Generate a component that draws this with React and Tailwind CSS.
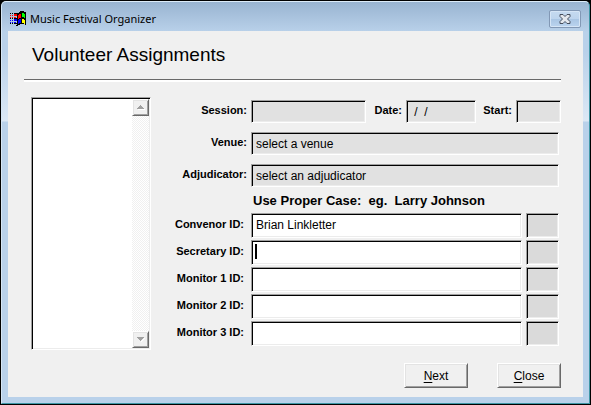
import React from "react";
import { clsx } from "clsx";

const sunken =
  "block min-w-0 rounded-none border border-t-[#a0a0a0] border-l-[#a0a0a0] border-b-white border-r-white shadow-[inset_1px_1px_0_#000,inset_-1px_-1px_0_#ececec] outline-none";
const raised =
  "border border-t-white border-l-white border-b-[#696969] border-r-[#696969] shadow-[inset_1px_1px_0_#e3e3e3,inset_-1px_-1px_0_#a0a0a0] bg-[#f0f0f0]";
const labelText = "shrink-0 text-right text-[11px] font-bold";

function Field({ className, ...props }) {
  return (
    <input
      type="text"
      className={clsx(sunken, "px-1 text-[12px] text-black", className)}
      {...props}
    />
  );
}

function WindowsLogo() {
  return (
    <svg width="16" height="16" viewBox="0 0 16 16" shapeRendering="crispEdges" aria-hidden="true">
      <path
        fill="#000"
        d="M9 1h1V0h4v1h2v13h-1v-1h-5v1H8v1H6v-1h1V2h2zM0 2h1v1H0zM2 2h1v1H2zM4 2h3v1H4zM0 7h1v1H0zM2 7h1v1H2zM4 7h3v1H4zM0 12h1v1H0zM2 12h1v1H2zM4 12h3v1H4z"
      />
      <path fill="#f00" d="M8 4h1V3h2v4H9v1H8zM0 4h1v1H0zM2 4h1v1H2zM4 3h3v2H4zM0 6h1v1H0zM2 6h1v1H2zM4 6h2v1H4z" />
      <path fill="#0f0" d="M12 2h2v1h1v4h-1V6h-2z" />
      <path fill="#00f" d="M8 9h1V8h2v4H9v1H8zM0 9h1v1H0zM2 9h1v1H2zM4 8h3v2H4zM0 11h1v1H0zM2 11h1v1H2zM4 11h2v1H4z" />
      <path fill="#ff0" d="M12 8h2v1h1v4h-1v-1h-2z" />
    </svg>
  );
}

function ScrollButton({ up }) {
  return (
    <button
      type="button"
      aria-label={up ? "Scroll up" : "Scroll down"}
      className={clsx(raised, "flex h-[17px] w-[17px] items-center justify-center")}
    >
      <svg width="8" height="5" viewBox="0 0 8 5" shapeRendering="crispEdges" aria-hidden="true">
        <path fill="#fff" d={up ? "M1 4h7v1H1z" : "M7 1h1v1H7zM6 2h1v1H6zM5 3h1v1H5zM4 4h1v1H4z"} />
        <path
          fill="#a0a0a0"
          d={up ? "M3 0h1v1h1v1h1v1h1v1H0V3h1V2h1V1h1z" : "M0 0h7v1H6v1H5v1H4v1H3V3H2V2H1V1H0z"}
        />
      </svg>
    </button>
  );
}

function PersonRow({ id, label, defaultValue, active }) {
  return (
    <div className="flex gap-1 pr-[2px]">
      <label htmlFor={id} className={clsx(labelText, "w-24 pr-[3px] leading-[22px]")}>
        {label}
      </label>
      <div className="relative min-w-0 flex-1">
        <Field id={id} defaultValue={defaultValue} className="h-[25px] w-full bg-white pb-[2px]" />
        {active && <span className="absolute top-[4px] left-[4px] h-[15px] w-[2px] bg-black" />}
      </div>
      <Field readOnly aria-label={label + " code"} className="h-[25px] w-[33px] bg-[#dadada]" />
    </div>
  );
}

const people = [
  { id: "convenor", label: "Convenor ID:", defaultValue: "Brian Linkletter" },
  { id: "secretary", label: "Secretary ID:", active: true },
  { id: "monitor1", label: "Monitor 1 ID:" },
  { id: "monitor2", label: "Monitor 2 ID:" },
  { id: "monitor3", label: "Monitor 3 ID:" },
];

export default function App() {
  return (
    <div className="flex min-h-screen bg-black p-px font-['Liberation_Sans',Arial,sans-serif] text-black">
      <div className="flex min-w-0 flex-1 flex-col rounded-t-[5px] border-t border-r border-b border-l border-t-[#dcebf8] border-r-[#3f97a6] border-b-[#3f97a6] border-l-[#d6e6f5] bg-[#b9d1ea] bg-[linear-gradient(to_bottom,#99b4d1_0,#b9d1ea_30px,#b9d1ea_50px,#dce8f5_119px,#b9d1ea_120px)] px-[6px] pb-[6px]">
        <header className="flex h-[29px] items-center justify-between pr-[2px] pl-[2px]">
          <div className="flex items-center gap-1 pt-[5px]">
            <WindowsLogo />
            <span className="font-['Noto_Sans',sans-serif] text-[11px] leading-4">
              Music Festival Organizer
            </span>
          </div>
          <button
            type="button"
            aria-label="Close window"
            className="mt-[4px] flex h-[18px] w-[32px] items-center justify-center rounded-[2px] border border-[#8298b5] bg-[linear-gradient(to_bottom,#c5daf0_0,#bdd4ed_50%,#a9c5e3_50%,#bbd4ef_100%)] shadow-[inset_0_0_0_1px_#d5e5f6]"
          >
            <svg width="12" height="10" viewBox="0 0 12 10" aria-hidden="true">
              <path
                d="M1 .5h3L6 2.500 8 .5h3v2L8.500 5 11 7.500v2H8L6 7.500 4 9.500H1v-2L3.500 5 1 2.500z"
                fill="#e4e8ee"
                stroke="#454d5c"
                strokeWidth="1"
              />
            </svg>
          </button>
        </header>

        <main className="flex-1 bg-[#f0f0f0] pr-[22px] pb-[9px] pl-4">
          <h1 className="h-12 pt-3 pl-2 text-[19px] leading-6">Volunteer Assignments</h1>
          <hr className="h-[3px] border-0 border-t border-[#696969] bg-white" />

          <div className="mt-[15px] flex pl-[7px]">
            <div className={clsx(sunken, "flex w-[120px] shrink-0 bg-white p-px")}>
              <div role="listbox" aria-label="Assignments" className="flex-1" />
              <div className="flex w-[17px] flex-col justify-between bg-[#f7f7f7] bg-[repeating-conic-gradient(#f0f0f0_0_25%,#fff_0_50%)] bg-[length:2px_2px]">
                <ScrollButton up />
                <ScrollButton />
              </div>
            </div>

            <form className="min-w-0 flex-1 pt-[3px] pb-1">
              <div className="flex flex-col gap-[9px]">
                <div className="flex gap-1">
                  <label htmlFor="session" className={clsx(labelText, "w-24 leading-[20px]")}>Session:</label>
                  <Field id="session" readOnly className="h-[23px] flex-1 bg-[#e1e1e1]" />
                  <label htmlFor="date" className={clsx(labelText, "w-8 leading-[20px]")}>Date:</label>
                  <Field id="date" defaultValue=" /  /" className="h-[23px] w-[70px] bg-[#e1e1e1]" />
                  <label htmlFor="start" className={clsx(labelText, "w-8 leading-[20px]")}>Start:</label>
                  <Field id="start" className="h-[23px] w-[45px] bg-[#e1e1e1]" />
                </div>
                <div className="flex gap-1 pr-[2px]">
                  <label htmlFor="venue" className={clsx(labelText, "w-24 leading-[20px]")}>Venue:</label>
                  <Field id="venue" readOnly value="select a venue" className="h-[23px] flex-1 bg-[#e1e1e1]" />
                </div>
                <div className="flex gap-1 pr-[2px]">
                  <label htmlFor="adjudicator" className={clsx(labelText, "w-24 leading-[20px]")}>Adjudicator:</label>
                  <Field id="adjudicator" readOnly value="select an adjudicator" className="h-[23px] flex-1 bg-[#e1e1e1]" />
                </div>
              </div>
              <p className="h-[26px] pt-[6px] pl-[102px] text-[13px] leading-4 font-bold whitespace-pre">
                Use Proper Case:  eg.  Larry Johnson
              </p>
              <div className="flex flex-col gap-[2px]">
                {people.map((p) => (
                  <PersonRow key={p.id} {...p} />
                ))}
              </div>
            </form>
          </div>

          <div className="mt-[13px] flex justify-end gap-[29px]">
            <button type="button" className={clsx(raised, "h-[25px] w-16 text-[12px]")}>
              <span className="underline underline-offset-2">N</span>ext
            </button>
            <button type="button" className={clsx(raised, "h-[25px] w-16 text-[12px]")}>
              <span className="underline underline-offset-2">C</span>lose
            </button>
          </div>
        </main>
      </div>
    </div>
  );
}
